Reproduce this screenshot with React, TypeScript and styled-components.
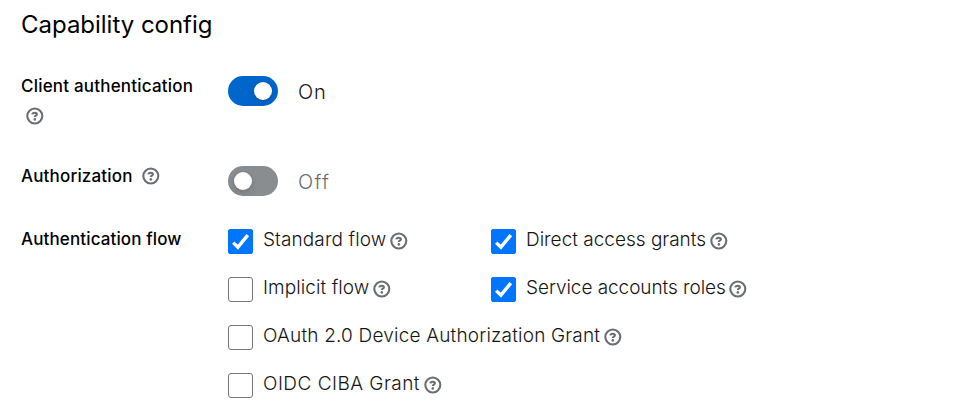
import React from "react";
import styled, { createGlobalStyle } from "styled-components";

const GlobalStyle = createGlobalStyle`
  * { box-sizing: border-box; }
  body {
    margin: 0;
    background: #fff;
    color: #151515;
    font-family: Inter, "Open Sans", sans-serif;
  }
`;

const Page = styled.main`
  height: 408px;
  padding: 9px 21px 0;
  overflow: hidden;
`;

const Title = styled.h1`
  margin: 0;
  height: 67px;
  font-size: 24px;
  font-weight: 400;
  line-height: 32px;
  letter-spacing: -0.02px;
  color: #000;
  white-space: nowrap;
`;

const FormRow = styled.section<{ $height: number }>`
  display: grid;
  grid-template-columns: 207px 1fr;
  height: ${(p) => p.$height}px;
`;

const LabelCell = styled.div<{ $stacked?: boolean; $top?: number }>`
  display: flex;
  flex-direction: ${(p) => (p.$stacked ? "column" : "row")};
  gap: ${(p) => (p.$stacked ? 11 : 9)}px;
  align-items: flex-start;
  padding-top: ${(p) => p.$top ?? 0}px;
`;

const FieldLabel = styled.span<{ $spacing: number }>`
  font-size: 17px;
  font-weight: 500;
  line-height: 20px;
  letter-spacing: ${(p) => p.$spacing}px;
  color: #000;
  white-space: nowrap;
`;

const HelpSvg = styled.svg<{ $indent?: number; $top?: number }>`
  display: block;
  flex: none;
  width: 18px;
  height: 18px;
  margin-left: ${(p) => p.$indent ?? 0}px;
  margin-top: ${(p) => p.$top ?? 0}px;
  color: #6a6e73;
`;

const SwitchField = styled.div`
  display: flex;
  gap: 20px;
  height: 30px;
  align-items: center;
`;

const Track = styled.button<{ $on: boolean }>`
  display: flex;
  align-items: center;
  justify-content: ${(p) => (p.$on ? "flex-end" : "flex-start")};
  width: 50px;
  height: 30px;
  padding: 0 6px;
  border: 0;
  border-radius: 15px;
  background: ${(p) => (p.$on ? "#06c" : "#8a8d90")};
`;

const Knob = styled.span`
  width: 18px;
  height: 18px;
  border-radius: 50%;
  background: #fff;
  box-shadow: 0 3px 6px rgba(3, 3, 3, 0.13), 0 0 3px rgba(3, 3, 3, 0.1);
`;

const BodyText = styled.span<{ $spacing?: number; $muted?: boolean; $size?: number }>`
  padding-top: 2px;
  font-size: ${(p) => p.$size ?? 19}px;
  font-weight: 300;
  line-height: 24px;
  letter-spacing: ${(p) => p.$spacing ?? 0}px;
  color: ${(p) => (p.$muted ? "#6a6e73" : "#151515")};
  white-space: nowrap;
`;

const Options = styled.div`
  display: grid;
  grid-template-columns: 263px 1fr;
  grid-auto-rows: 48px;
`;

const Option = styled.div<{ $wide?: boolean }>`
  display: flex;
  align-items: flex-start;
  grid-column: ${(p) => (p.$wide ? "1 / -1" : "auto")};
`;

const Box = styled.span<{ $checked: boolean }>`
  display: flex;
  flex: none;
  width: 25px;
  height: 25px;
  margin: 3px 10px 0 0;
  border: 1px solid ${(p) => (p.$checked ? "#0075ff" : "#767676")};
  border-radius: ${(p) => (p.$checked ? 2 : 3)}px;
  background: ${(p) => (p.$checked ? "#0075ff" : "#fff")};
`;

const CheckSvg = styled.svg`
  width: 23px;
  height: 23px;
`;

function Help({ indent, top }: { indent?: number; top?: number }) {
  return (
    <HelpSvg viewBox="0 0 18 18" $indent={indent} $top={top} aria-label="Help">
      <circle cx="8.8" cy="9" r="7.5" fill="none" stroke="currentColor" strokeWidth="2.1" />
      <path
        d="M6.3 7.4C6.5 6.2 7.5 5.7 8.7 5.7C10 5.7 10.9 6.3 10.9 7.3C10.9 8.7 8.8 8.6 8.8 10.1"
        fill="none"
        stroke="currentColor"
        strokeWidth="2.1"
      />
      <circle cx="8.8" cy="12.4" r="1.3" fill="currentColor" />
    </HelpSvg>
  );
}

function Switch({ on }: { on: boolean }) {
  return (
    <SwitchField>
      <Track type="button" role="switch" aria-checked={on} $on={on}>
        <Knob />
      </Track>
      <BodyText $muted={!on} $size={20} $spacing={on ? 0.8 : 1.3}>
        {on ? "On" : "Off"}
      </BodyText>
    </SwitchField>
  );
}

const flows = [
  { name: "Standard flow", checked: true, spacing: 0.1, gap: 4 },
  { name: "Direct access grants", checked: true, spacing: 0, gap: 4 },
  { name: "Implicit flow", checked: false, spacing: 0.08, gap: 3.3 },
  { name: "Service accounts roles", checked: true, spacing: -0.06, gap: 3.4 },
  { name: "OAuth 2.0 Device Authorization Grant", checked: false, spacing: 0.19, gap: 4, wide: true },
  { name: "OIDC CIBA Grant", checked: false, spacing: 0.48, gap: 3.6, wide: true },
];

export default function App() {
  return (
    <>
      <GlobalStyle />
      <Page>
        <Title>Capability config</Title>
        <FormRow $height={90}>
          <LabelCell $stacked>
            <FieldLabel $spacing={0.2}>Client authentication</FieldLabel>
            <Help indent={5} />
          </LabelCell>
          <Switch on />
        </FormRow>
        <FormRow $height={60}>
          <LabelCell>
            <FieldLabel $spacing={0.17}>Authorization</FieldLabel>
            <Help top={1} />
          </LabelCell>
          <Switch on={false} />
        </FormRow>
        <FormRow $height={192}>
          <LabelCell $top={3}>
            <FieldLabel $spacing={0.13}>Authentication flow</FieldLabel>
          </LabelCell>
          <Options>
            {flows.map((flow) => (
              <Option key={flow.name} $wide={flow.wide}>
                <Box $checked={flow.checked} role="checkbox" aria-checked={flow.checked}>
                  {flow.checked && (
                    <CheckSvg viewBox="0 0 23 23">
                      <path
                        d="M4.2 12.6L8.9 17.2L18.8 5.2"
                        fill="none"
                        stroke="#fff"
                        strokeWidth="3.4"
                      />
                    </CheckSvg>
                  )}
                </Box>
                <BodyText $spacing={flow.spacing}>{flow.name}</BodyText>
                <Help indent={flow.gap} top={6} />
              </Option>
            ))}
          </Options>
        </FormRow>
      </Page>
    </>
  );
}
